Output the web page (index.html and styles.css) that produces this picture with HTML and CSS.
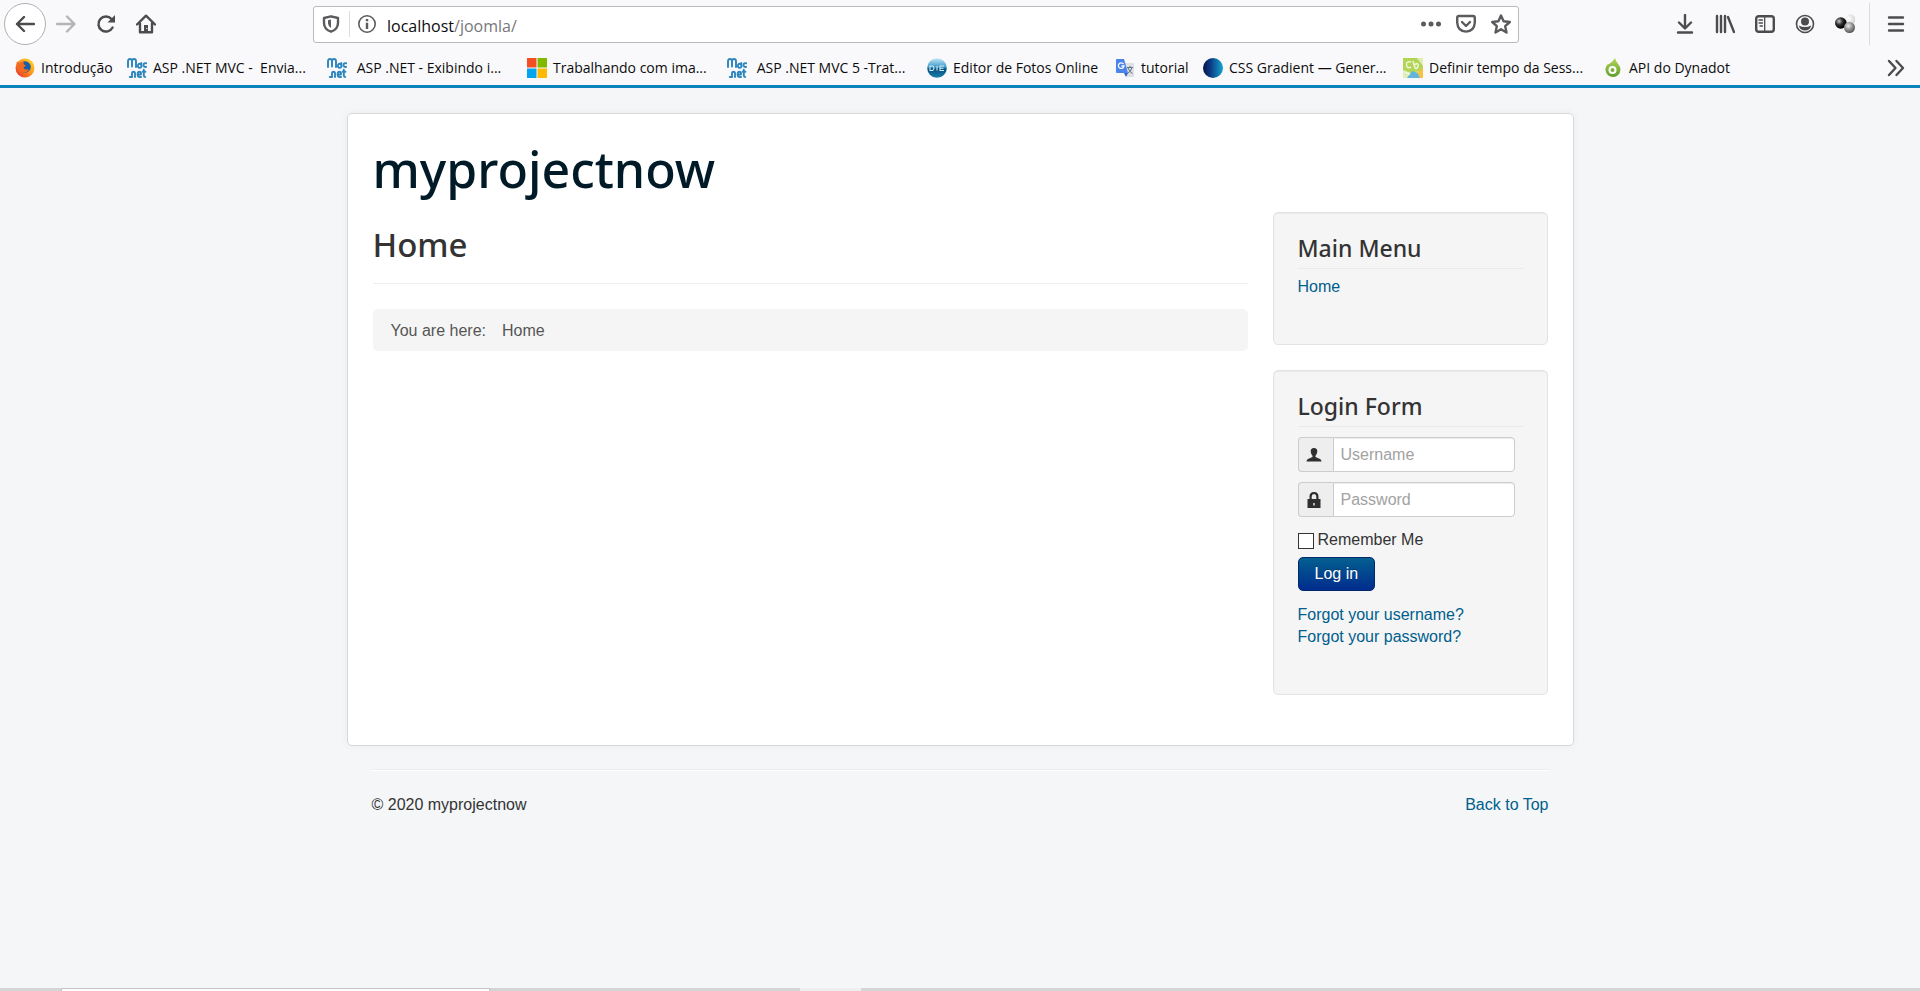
FILE: index.html
```html
<!DOCTYPE html>
<html lang="en">
<head>
<meta charset="utf-8">
<title>Home</title>
<link rel="stylesheet" href="styles.css">
</head>
<body>
<svg class="defs" aria-hidden="true">
  <defs>
    <linearGradient id="g-fire" x1="1" y1="0" x2="0" y2="1"><stop offset="0" stop-color="#ffe226"/><stop offset=".45" stop-color="#ff9a1e"/><stop offset="1" stop-color="#e8202e"/></linearGradient>
    <linearGradient id="g-die" x1="0" y1="0" x2="0" y2="1"><stop offset="0" stop-color="#c4e6f5"/><stop offset=".45" stop-color="#3d9dcb"/><stop offset=".55" stop-color="#04507e"/><stop offset="1" stop-color="#1b7fae"/></linearGradient>
    <linearGradient id="g-css" x1="0" y1="0" x2="1" y2="0"><stop offset="0" stop-color="#06104a"/><stop offset=".4" stop-color="#0b3f86"/><stop offset="1" stop-color="#14a3cf"/></linearGradient>
    <linearGradient id="g-drop" x1="0" y1="0" x2="0" y2="1"><stop offset="0" stop-color="#b5d65a"/><stop offset="1" stop-color="#5f9d2b"/></linearGradient>
    <radialGradient id="g-ball1" cx=".35" cy=".35" r=".6"><stop offset="0" stop-color="#ccc"/><stop offset=".5" stop-color="#333"/><stop offset="1" stop-color="#000"/></radialGradient>
    <radialGradient id="g-ball2" cx=".4" cy=".35" r=".65"><stop offset="0" stop-color="#eee"/><stop offset=".5" stop-color="#999"/><stop offset="1" stop-color="#555"/></radialGradient>
    <radialGradient id="g-ball3" cx=".3" cy=".4" r=".7"><stop offset="0" stop-color="#fff"/><stop offset="1" stop-color="#d2d2d4"/></radialGradient>
    <symbol id="macnet" viewBox="0 0 20 20">
      <g fill="none" stroke="#2b86bd" stroke-width="1.9" stroke-linecap="round" stroke-linejoin="round">
        <path d="M1 9V3.200Q1 1 3 1T5 3.200V8.500M5 3.200Q5 1 7 1T9 3.200V9"/>
        <path d="M14.300 5V9M14.300 7a1.800 2 0 1 1-3.300 0a1.800 2 0 0 1 3.300 0M19.300 5.300Q16.600 4.600 16.600 7T19.300 8.900"/>
        <path d="M2.800 19H5V15.500Q5 13.700 6.500 13.700T8 15.500V19M11 16.500H14Q14 13.700 12.300 13.700T10.600 16.300T12.400 19H14M16.800 11.800V17.500Q16.800 19 18.200 19M15.600 13.800H18.400"/>
      </g>
    </symbol>
  </defs>
</svg>

<header class="browser">
  <div class="toolbar">
    <nav class="history" aria-label="Browser controls">
      <button class="tool back" aria-label="Back"><svg viewBox="0 0 20 20"><path d="M19 10H2M9 3L2 10L9 17"/></svg></button>
      <button class="tool forward" aria-label="Forward"><svg viewBox="0 0 20 20"><path d="M1 10H18M11 2.500L18.500 10L11 17.500"/></svg></button>
      <button class="tool" aria-label="Reload"><svg viewBox="0 0 20 20"><path d="M16.600 13.500A7.500 7.500 0 1 1 15.500 5"/><path class="solid" d="M19 1V8.500H11.500Z"/></svg></button>
      <button class="tool" aria-label="Home page"><svg viewBox="0 0 20 20"><path d="M1 10.500L10 1.700L19 10.500M4 9.500V18.300H16V9.500"/><path class="solid" d="M8 11H12V18H8Z"/><path class="knob" d="M10.600 14.500H10.900"/></svg></button>
    </nav>
    <form class="address">
      <svg class="icon18" viewBox="0 0 18 18"><path d="M9 1.300L16 3V8Q15.800 14.500 9 16.700Q2.200 14.500 2 8V3Z"/><path class="solid" d="M9 4.500L6 5.300V8.500Q6.200 11.600 9 13Z"/></svg>
      <span class="divider"></span>
      <svg class="icon18 thin" viewBox="0 0 18 18"><circle cx="9" cy="9" r="8.200"/><path class="solid" d="M7.800 4H10.200V6.300H7.800ZM7.800 7.800H10.200V14H7.800Z"/></svg>
      <span class="url"><span class="host">localhost</span>/joomla/</span>
      <button type="button" class="tool" aria-label="Page actions"><svg viewBox="0 0 20 20"><g class="solid"><circle cx="2.500" cy="10" r="2.500"/><circle cx="10" cy="10" r="2.500"/><circle cx="17.500" cy="10" r="2.500"/></g></svg></button>
      <button type="button" class="tool" aria-label="Save to Pocket"><svg viewBox="0 0 20 20"><path d="M3 2H17Q18.800 2 18.800 3.800V8.500Q18.300 17.300 10 17.600Q1.700 17.300 1.200 8.500V3.800Q1.200 2 3 2ZM6 8L10 12L14 8"/></svg></button>
      <button type="button" class="tool" aria-label="Bookmark"><svg viewBox="0 0 20 20"><path d="M10 1.500L12.600 7.300L18.800 8L14.200 12.200L15.500 18.500L10 15.300L4.500 18.500L5.800 12.200L1.200 8L7.400 7.300Z"/></svg></button>
    </form>
    <div class="extras">
      <button class="tool" aria-label="Downloads"><svg viewBox="0 0 20 20"><path d="M10 1V14M4 8.500L10 14.500L16 8.500M3 18.500H17"/></svg></button>
      <button class="tool" aria-label="Library"><svg viewBox="0 0 20 20"><path d="M2 2V18M6 2V18M10 2V18M13 3L19 18"/></svg></button>
      <button class="tool" aria-label="Sidebar"><svg viewBox="0 0 20 20"><rect x="1.200" y="2.200" width="17.600" height="15.600" rx="2.500"/><path class="fine" d="M9.700 2V18"/><path class="fine" d="M4 6H7.500M4 9H7.500M5 12H7.500"/></svg></button>
      <button class="tool thin" aria-label="Account"><svg viewBox="0 0 20 20"><circle cx="10" cy="10" r="8.500"/><circle class="solid" cx="10" cy="7.500" r="4"/><path class="solid" d="M3.800 11.500Q10 14.500 16.200 11.500Q15 16.500 10 16.500T3.800 11.500Z"/></svg></button>
      <button class="tool" aria-label="Extension"><svg viewBox="0 0 20 20"><g stroke="none"><circle cx="15.500" cy="5.500" r="5" fill="url(#g-ball3)"/><circle cx="5.800" cy="9" r="5.800" fill="url(#g-ball1)"/><circle cx="14.500" cy="13.500" r="5.500" fill="url(#g-ball2)"/></g></svg></button>
      <span class="divider tall"></span>
      <button class="tool" aria-label="Menu"><svg viewBox="0 0 20 20"><path d="M3 3.500H17M3 10H17M3 16.500H17"/></svg></button>
    </div>
  </div>
  <nav class="bookmarks" aria-label="Bookmarks">
    <a href="#" class="mark first"><svg viewBox="0 0 20 20"><circle cx="10" cy="10" r="9.500" fill="url(#g-fire)"/><circle cx="10" cy="9" r="5.800" fill="#175ea8"/><path d="M1.500 4Q3 5 5 5Q7 3.200 9 3.500Q8 5 9 6.500L11 7.500Q9.500 9 8.500 9.500Q9 12 12 11.500Q13 11 14 12Q11 16 6.500 14Q2 11.500 1.500 4Z" fill="#f26a22"/></svg>Introdução</a>
    <a href="#" class="mark long"><svg><use href="#macnet"/></svg>ASP .NET MVC -&nbsp; Envia...</a>
    <a href="#" class="mark long"><svg><use href="#macnet"/></svg>&nbsp;ASP .NET - Exibindo i...</a>
    <a href="#" class="mark long"><svg viewBox="0 0 20 20"><path fill="#f25022" d="M0 0H9.500V9.500H0Z"/><path fill="#7fba00" d="M10.500 0H20V9.500H10.500Z"/><path fill="#00a4ef" d="M0 10.500H9.500V20H0Z"/><path fill="#ffb900" d="M10.500 10.500H20V20H10.500Z"/></svg>Trabalhando com ima...</a>
    <a href="#" class="mark long"><svg><use href="#macnet"/></svg>&nbsp;ASP .NET MVC 5 -Trat...</a>
    <a href="#" class="mark editor"><svg viewBox="0 0 20 20"><circle cx="10" cy="10" r="9.800" fill="url(#g-die)"/><path d="M3 8H5.500Q7 8 7 10T5.500 12.500H3ZM10 8V12.500M17 8H13V12.500H17M13 10.200H16.500" fill="none" stroke="#d5e9f3" stroke-width="1.100"/></svg>Editor de Fotos Online</a>
    <a href="#" class="mark tutorial"><svg viewBox="0 0 20 20"><path fill="#dde0e5" d="M8 5H19V19H12Z"/><path fill="#4a83ee" d="M2 1H9L13 15H2Q1 15 1 14V2Q1 1 2 1Z"/><path fill="#3062c4" d="M9 15H13L11 19Z"/><path d="M8.500 6A2.800 2.800 0 1 0 9 8H6.500" fill="none" stroke="#fff" stroke-width="1.300"/><path d="M12 9.500H18M15 8V9.500M17 9.500Q16 13.500 12.500 15.500M13 10Q14.500 14 17.500 15.500" fill="none" stroke="#65707f" stroke-width="1"/></svg>tutorial</a>
    <a href="#" class="mark long"><svg viewBox="0 0 20 20"><circle cx="10" cy="10" r="10" fill="url(#g-css)"/></svg>CSS Gradient — Gener...</a>
    <a href="#" class="mark long"><svg viewBox="0 0 20 20"><path fill="#e0efb9" d="M0 0H20V20H0Z"/><path fill="#b3d556" d="M0 0H14L20 8V12L8 15L0 12Z"/><path fill="#63b5dc" d="M4 20L9 13L15 15L18 20Z"/><path fill="#f6c343" d="M14 14L20 10V20H17Z"/><path d="M8 4Q3 3 3.500 7T8 9M10 3L12 10M11 7Q16 4 15 8T12 10M1 14L7 16" fill="none" stroke="#eef6d8" stroke-width="1.500"/></svg>Definir tempo da Sess...</a>
    <a href="#" class="mark"><svg viewBox="0 0 20 20"><path fill="url(#g-drop)" d="M12 0Q12.500 3 15.500 6.500A7.500 7.500 0 1 1 4 7Q9 5 12 0Z"/><circle cx="9.500" cy="12" r="3" fill="none" stroke="#fff" stroke-width="2"/></svg>API do Dynadot</a>
    <button class="tool more" aria-label="More bookmarks"><svg viewBox="0 0 20 20"><path d="M3 3L9.500 10L3 17M10.500 3L17 10L10.500 17"/></svg></button>
  </nav>
</header>

<div class="page">
  <div class="container">
    <header class="site-header"><a href="#" class="site-title">myprojectnow</a></header>
    <div class="columns">
      <main class="content">
        <h1 class="page-heading">Home</h1>
        <hr class="rule">
        <div class="breadcrumb"><span>You are here:</span><span>Home</span></div>
      </main>
      <aside class="sidebar">
        <section class="well">
          <h2 class="well-heading">Main Menu</h2>
          <ul class="links"><li><a href="#">Home</a></li></ul>
        </section>
        <section class="well">
          <h2 class="well-heading">Login Form</h2>
          <form class="login">
            <div class="field">
              <label class="addon" for="username" aria-label="Username"><svg viewBox="0 0 16 16"><path d="M8 1Q11.500 1 11.300 4.500Q11 7.500 9.500 8.700V10L14 12Q15.500 12.700 15.500 14.500H.5Q.5 12.700 2 12L6.500 10V8.700Q5 7.500 4.700 4.500Q4.500 1 8 1Z"/></svg></label>
              <input class="text" id="username" type="text" placeholder="Username">
            </div>
            <div class="field">
              <label class="addon" for="password" aria-label="Password"><svg viewBox="0 0 16 16"><path fill-rule="evenodd" d="M3.500 7V4.500Q3.500 0 8 0T12.500 4.500V7H14.500V16H1.500V7ZM5.700 7H10.300V4.500Q10.300 2 8 2T5.700 4.500ZM7.300 11V13.500H8.700V11Z"/></svg></label>
              <input class="text" id="password" type="password" placeholder="Password">
            </div>
            <div class="remember"><input id="remember" type="checkbox"><label for="remember">Remember Me</label></div>
            <button type="button" class="submit">Log in</button>
          </form>
          <ul class="links"><li><a href="#">Forgot your username?</a></li><li><a href="#">Forgot your password?</a></li></ul>
        </section>
      </aside>
    </div>
  </div>
  <footer class="footer">
    <span>© 2020 myprojectnow</span>
    <a href="#">Back to Top</a>
  </footer>
</div>

<div class="taskbar"><span class="task-search"></span><span class="task-active"></span></div>
</body>
</html>
```

FILE: styles.css
```css
* { box-sizing: border-box; }

body {
  margin: 0;
  min-height: 100vh;
  display: flex;
  flex-direction: column;
  background: #f4f6f8;
  color: #333;
  font: 16px/22px "Liberation Sans", Arial, sans-serif;
}

a { color: #005e8d; text-decoration: none; }
ul { list-style: none; margin: 0; padding: 0; }
.defs { position: absolute; width: 0; height: 0; }

/* Browser chrome */
.browser {
  height: 88px;
  background: #f9f9fb;
  border-bottom: 3px solid #0a84bb;
  font-family: "Open Sans", sans-serif;
}

.toolbar { display: flex; align-items: center; height: 48px; padding: 0 14px 0 4px; }

.tool {
  display: flex;
  flex: none;
  margin: 0;
  padding: 0;
  border: 0;
  background: none;
}

.tool svg, .icon18 {
  display: block;
  flex: none;
  width: 20px;
  height: 20px;
  fill: none;
  stroke: #4c4c4f;
  stroke-width: 2.4;
  stroke-linecap: round;
  stroke-linejoin: round;
}

.icon18 { width: 18px; height: 18px; }
.tool .solid, .icon18 .solid { fill: #4c4c4f; stroke: none; }
.thin svg, .icon18.thin { stroke-width: 1.6; }
.knob { stroke: #f9f9fb; stroke-width: 1; }
.fine { stroke-width: 1.3; }

.history { display: flex; align-items: center; gap: 20px; width: 309px; }
.back {
  width: 42px;
  height: 42px;
  align-items: center;
  justify-content: center;
  border: 1px solid #b1b1b5;
  border-radius: 50%;
  background: #fff;
}
.forward { margin-left: -10px; }
.forward svg { stroke: #b5b5b7; }

.address {
  flex: 1;
  display: flex;
  align-items: center;
  gap: 15px;
  height: 37px;
  padding: 0 7px 0 8px;
  border: 1px solid #b9b9bc;
  border-radius: 3px;
  background: #fff;
}
.address svg { stroke: #5b5b5e; }
.address .solid { fill: #5b5b5e; }
.divider { width: 1px; height: 26px; background: #dcdcdf; }
.address .divider { margin: 0 -7px 0 -6px; }
.divider.tall { height: 42px; margin: 0 -4px 0 -6px; }
.url { flex: 1; margin-left: -4px; padding-top: 3px; color: #77777a; font-size: 16px; }
.host { color: #0c0c0d; }

.extras { display: flex; align-items: center; gap: 20px; margin-left: 156px; }

.bookmarks {
  display: flex;
  align-items: center;
  height: 37px;
  padding: 2px 14px 0 15px;
  font-size: 14px;
}
.mark { display: flex; align-items: center; gap: 6px; flex: none; color: #0c0c0d; white-space: nowrap; }
.mark svg { width: 20px; height: 20px; }
.first { width: 112px; }
.long { width: 200px; }
.editor { width: 188px; }
.tutorial { width: 88px; }
.more { margin-left: auto; }

/* Site */
.page { flex: 1; width: 100%; max-width: 1227px; margin: 0 auto; padding-top: 25px; }

.container {
  padding: 25px;
  border: 1px solid #d7d8da;
  border-radius: 5px;
  background: #fff;
  box-shadow: 0 0 8px rgba(0, 0, 0, .05);
}

.site-header { margin-bottom: 13px; }
.site-title { display: block; color: #001a27; font: 500 50px/60px "Noto Sans", "Open Sans", sans-serif; }

.columns { display: flex; align-items: flex-start; gap: 25px; padding-bottom: 25px; }
.content { flex: 1; }
.page-heading { margin: 13px 0 18px; font: 500 33px/40px "Noto Sans", "Open Sans", sans-serif; }
.rule { margin: 0 0 25px; border: 0; border-top: 1px solid #eee; }

.breadcrumb {
  display: flex;
  gap: 16px;
  padding: 11px 18px 9px;
  border-radius: 5px;
  background: #f5f5f5;
  color: #555;
}

.sidebar { width: 275px; }
.well {
  margin-bottom: 25px;
  padding: 24px 24px 46px;
  border: 1px solid #e3e3e3;
  border-radius: 5px;
  background: #f5f5f5;
  box-shadow: inset 0 1px 1px rgba(0, 0, 0, .05);
}
.well:last-child { margin-bottom: 0; }
.well-heading {
  margin: 0 0 7px;
  padding-bottom: 9px;
  border-bottom: 1px solid #eaeaea;
  font: 500 23px/22px "Noto Sans", "Open Sans", sans-serif;
}

.login { margin: 0 0 13px; padding-top: 3px; }
.field { display: flex; width: 217px; height: 35px; margin-bottom: 10px; }
.addon {
  display: flex;
  align-items: center;
  justify-content: center;
  width: 35px;
  padding-right: 3px;
  border: 1px solid #ccc;
  border-right: 0;
  border-radius: 4px 0 0 4px;
  background: #eee;
}
.addon svg { width: 16px; height: 16px; fill: #2f2f2f; }
.text {
  flex: 1;
  min-width: 0;
  padding: 0 7px;
  border: 1px solid #ccc;
  border-radius: 0 4px 4px 0;
  background: #fff;
  font: inherit;
  box-shadow: inset 0 1px 1px rgba(0, 0, 0, .075);
}
.text::placeholder { color: #a2a2a2; }

.remember { display: flex; align-items: center; gap: 4px; height: 26px; }
.remember input {
  appearance: none;
  width: 16px;
  height: 16px;
  margin: 2px 0 0;
  border: 1px solid #333;
  background: #fff;
}

.submit {
  display: block;
  height: 34px;
  margin-top: 4px;
  padding: 0 16px;
  border: 1px solid #012a6b;
  border-radius: 5px;
  background: linear-gradient(#035f90, #002c8e);
  color: #fff;
  font: inherit;
  text-shadow: 0 -1px 0 rgba(0, 0, 0, .25);
}

.footer {
  display: flex;
  justify-content: space-between;
  margin: 23px 25px 0;
  padding-top: 24px;
  border-top: 1px solid #ebecee;
  box-shadow: inset 0 1px 0 #fff;
}

/* Top edge of the taskbar */
.taskbar { display: flex; height: 3px; background: #d5d5d5; }
.task-search { width: 429px; margin-left: 61px; border: 1px solid #c4c4c4; border-bottom: 0; background: #fff; }
.task-active { width: 61px; margin-left: 310px; background: #eee; }
```
